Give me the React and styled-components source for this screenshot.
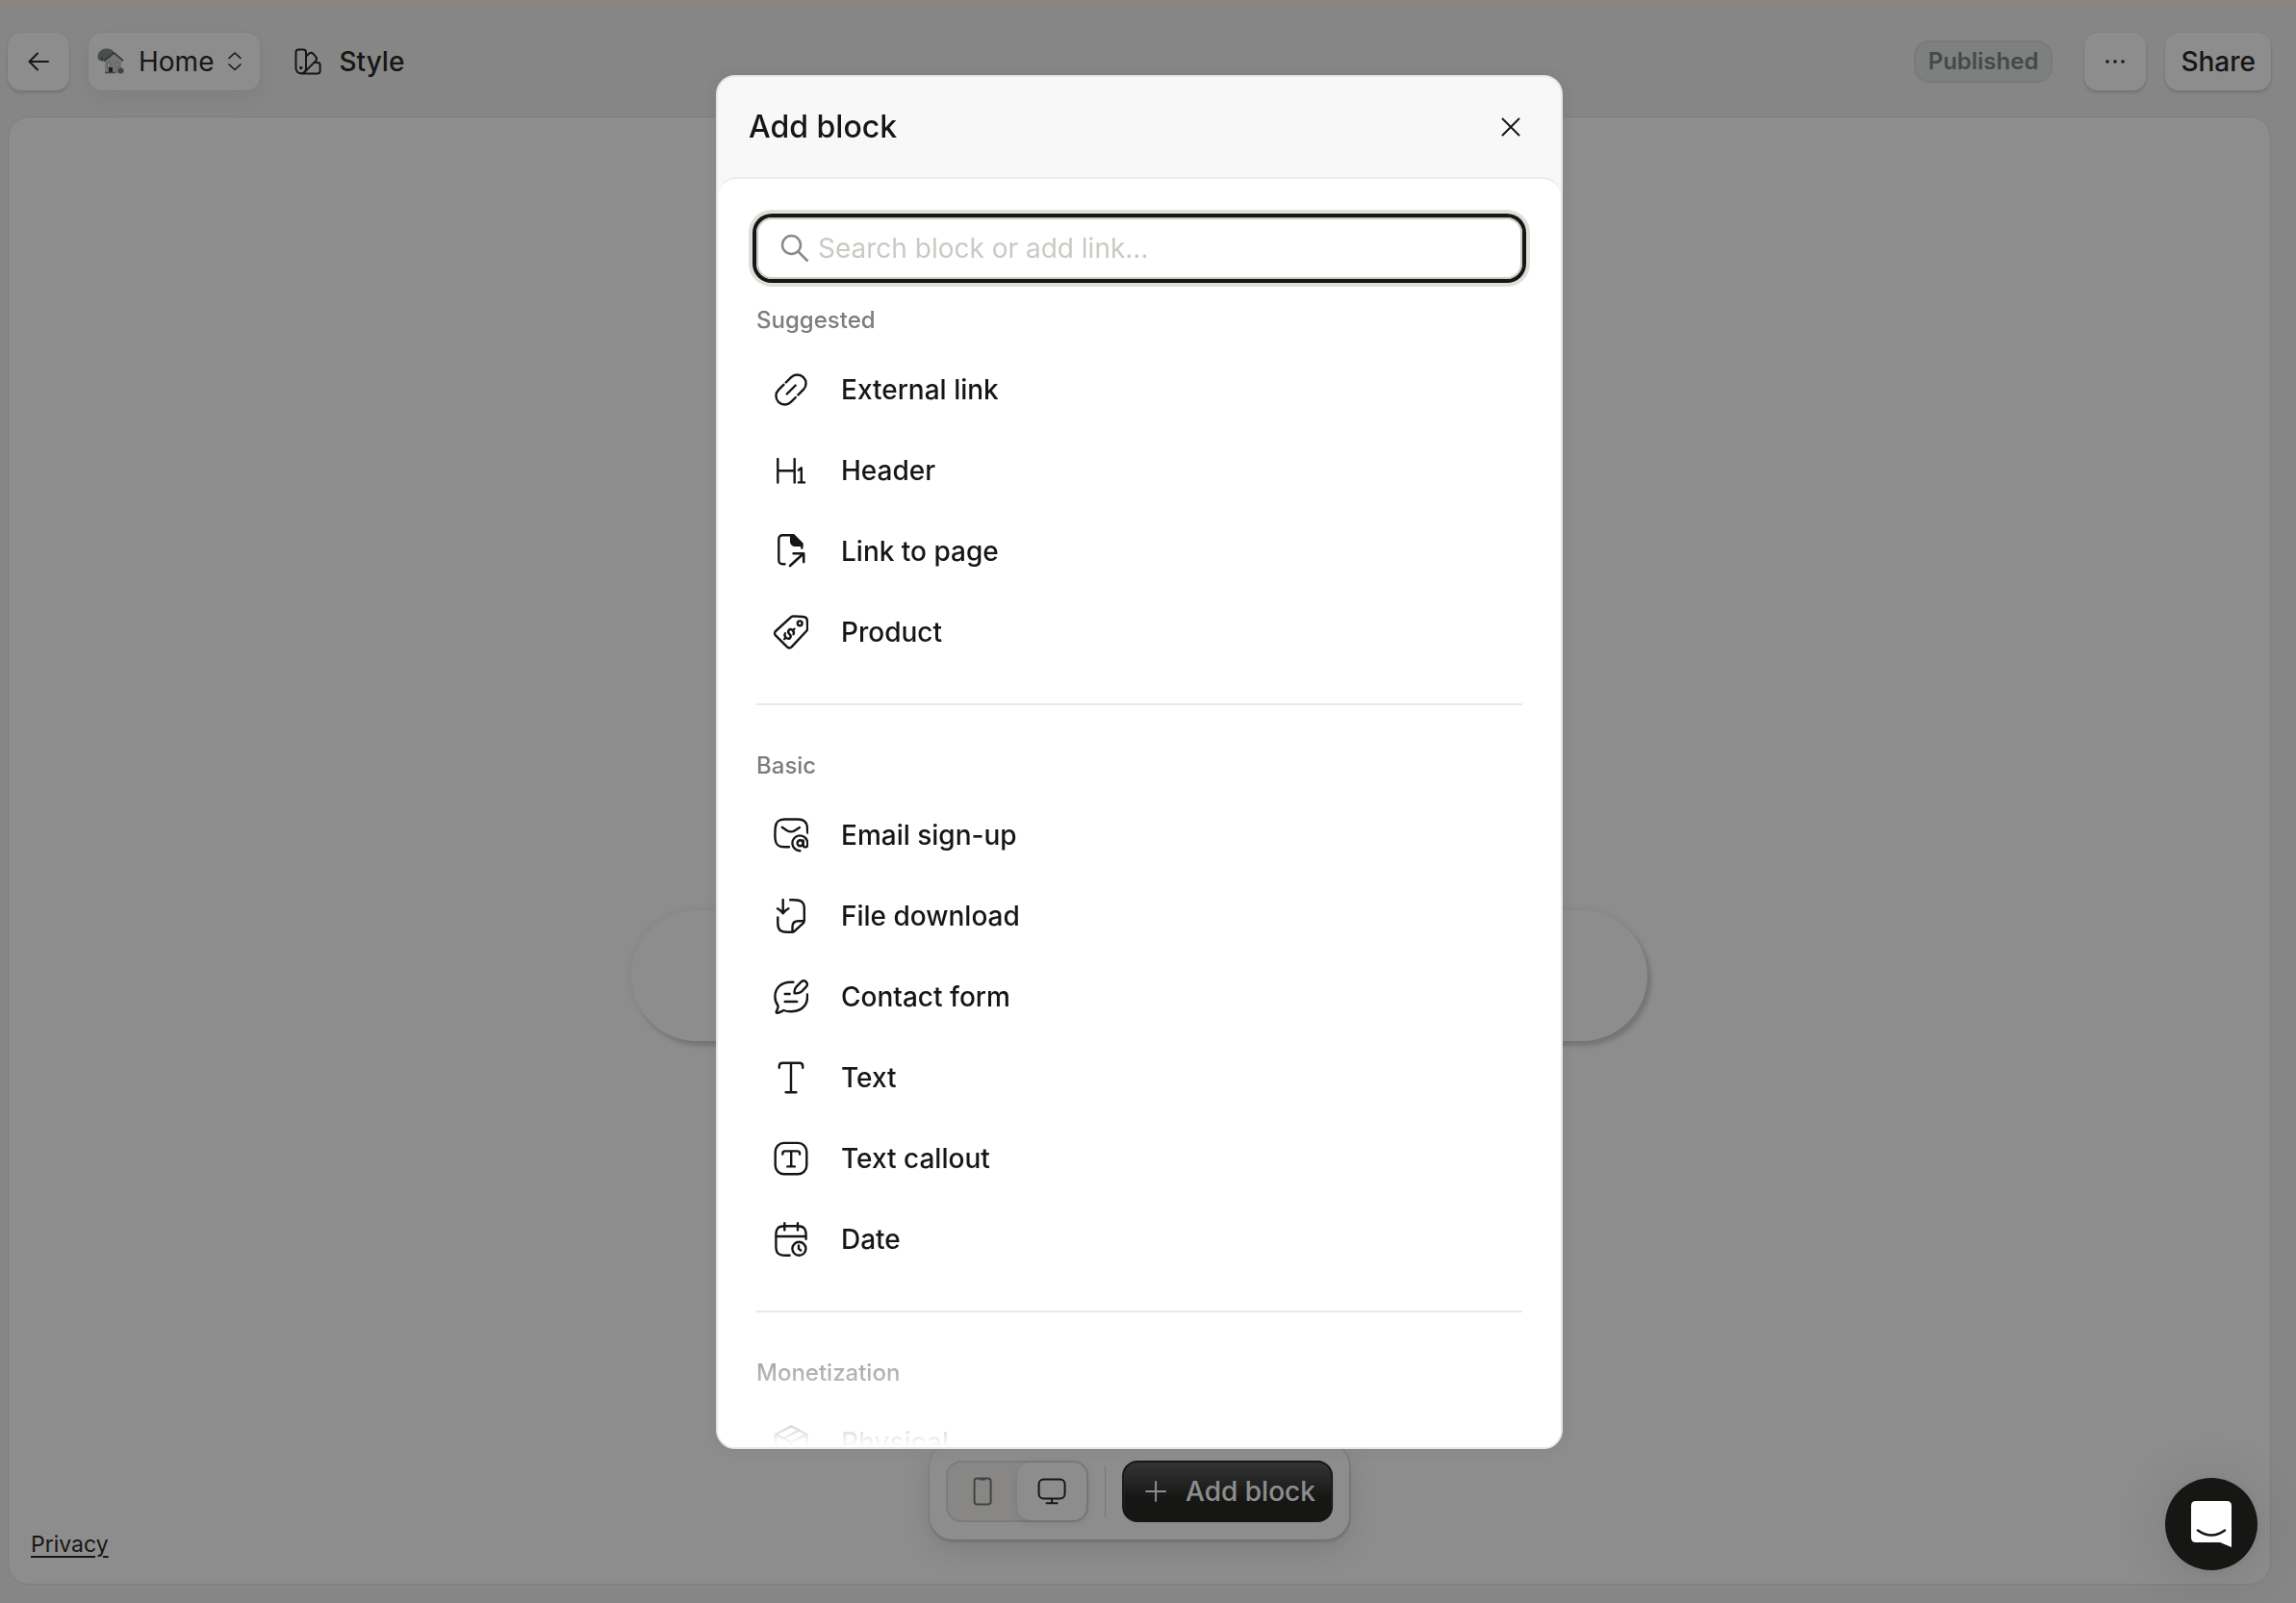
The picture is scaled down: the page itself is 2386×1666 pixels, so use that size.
import React from "react";
import styled, { createGlobalStyle } from "styled-components";

const ink = "#161614";
const scrim = "rgba(22, 22, 22, 0.49)";

const GlobalStyle = createGlobalStyle`
  * { box-sizing: border-box; }
  body { margin: 0; background: #f1f1f1; color: ${ink}; font-family: Inter, "Liberation Sans", sans-serif; font-size: 28px; line-height: 36px; }
  button, input { font: inherit; color: inherit; }
  h1, h2, h3, ul { margin: 0; padding: 0; }
`;

/* ---------- page ---------- */

const Page = styled.div`
  min-height: 100vh;
  display: flex;
  flex-direction: column;
  padding: 0 26px 19px 8px;
`;

const Strip = styled.div`
  height: 9px;
  margin: 0 -26px 0 -8px;
  background: #faf0ec;
`;

const TopBar = styled.header`
  display: flex;
  justify-content: space-between;
  align-items: center;
  padding: 25px 0 27px;
`;

const BarGroup = styled.div`
  display: flex;
  align-items: center;
  gap: 20px;
`;

const BarButton = styled.button`
  display: inline-flex;
  align-items: center;
  justify-content: center;
  gap: ${(p) => p.$gap || 0}px;
  height: 60px;
  min-width: 64px;
  padding: ${(p) => p.$pad || 0};
  border: 0;
  border-radius: 14px;
  background: ${(p) => (p.$plain ? "transparent" : "#fff")};
  box-shadow: ${(p) =>
    p.$plain
      ? "none"
      : p.$soft
      ? "0 0 2px rgba(0,0,0,.1), 0 8px 20px rgba(0,0,0,.06)"
      : "0 0 2px rgba(0,0,0,.12), 0 3px 3px rgba(0,0,0,.12)"};
  font-weight: ${(p) => (p.$medium ? 500 : 400)};
`;

const Badge = styled.span`
  display: inline-flex;
  align-items: center;
  height: 44px;
  margin-right: 13px;
  padding: 0 13px;
  border: 2px solid #d6dad8;
  border-radius: 16px;
  background: #e2e6e4;
  color: #6f7d77;
  font-size: 24px;
  font-weight: 600;
`;

const Canvas = styled.main`
  position: relative;
  flex: 1;
  display: flex;
  flex-direction: column;
  justify-content: space-between;
  align-items: center;
  padding: 824px 23px 25px;
  border: 1px solid #e2e2e2;
  border-radius: 22px;
  background: #fff;
`;

const PillBlock = styled.div`
  width: 100%;
  max-width: 1056px;
  height: 136px;
  border-radius: 68px;
  background: #fff;
  box-shadow: 4px 5px 4px rgba(60, 75, 68, 0.22), 0 0 8px rgba(60, 60, 60, 0.1);
`;

const PrivacyLink = styled.a`
  align-self: flex-start;
  color: inherit;
  font-size: 23px;
  line-height: 32px;
  text-underline-offset: 4px;
  text-decoration-thickness: 2px;
`;

/* ---------- floating toolbar ---------- */

const Dock = styled.div`
  position: absolute;
  bottom: 46px;
  left: 50%;
  transform: translateX(-50%);
  display: flex;
  align-items: center;
  gap: 17px;
  padding: 18px 17px;
  border-radius: 24px;
  background: #fff;
  box-shadow: 0 0 2px rgba(0, 0, 0, 0.16), 0 3px 3px rgba(0, 0, 0, 0.12), 0 10px 32px rgba(0, 0, 0, 0.12);
`;

const Toggle = styled.div`
  display: flex;
  height: 64px;
  border: 2px solid #dadddb;
  border-radius: 16px;
  background: #f7f3f2;
`;

const ToggleButton = styled.button`
  display: grid;
  place-items: center;
  width: 72px;
  height: 60px;
  padding: 0;
  border: 0;
  border-radius: 14px;
  background: ${(p) => (p.$on ? "#fff" : "transparent")};
  color: ${(p) => (p.$on ? ink : "#66706c")};
  box-shadow: ${(p) => (p.$on ? "0 2px 8px rgba(0,0,0,.12)" : "none")};
`;

const DockRule = styled.div`
  width: 1px;
  height: 54px;
  background: #cfd3d1;
`;

const AddButton = styled.button`
  display: flex;
  align-items: center;
  gap: 20px;
  height: 64px;
  padding: 0 16px 0 22px;
  border: 2px solid ${ink};
  border-radius: 16px;
  background: linear-gradient(#4f5452, ${ink} 62%);
  color: #fff;
  font-weight: 500;
`;

const ChatButton = styled.button`
  position: fixed;
  z-index: 3;
  right: 40px;
  bottom: 34px;
  display: grid;
  place-items: center;
  width: 96px;
  height: 96px;
  padding: 0;
  border: 0;
  border-radius: 50%;
  background: ${ink};
  box-shadow: 0 2px 12px rgba(0, 0, 0, 0.06), 0 4px 60px rgba(0, 0, 0, 0.12);
`;

/* ---------- dialog ---------- */

const Backdrop = styled.div`
  position: fixed;
  z-index: 2;
  inset: 0;
  display: flex;
  justify-content: center;
  padding: 78px 18px 160px 0;
  background: ${scrim};
`;

const Dialog = styled.section`
  display: flex;
  flex-direction: column;
  width: 100%;
  max-width: 880px;
  border: 2px solid #e6e6e6;
  border-radius: 20px;
  background: #f8f8f8;
  box-shadow: 0 0 16px rgba(0, 0, 0, 0.06);
  overflow: hidden;
`;

const DialogHead = styled.header`
  display: flex;
  align-items: center;
  justify-content: space-between;
  height: 104px;
  flex: none;
  padding: 0 32px;
`;

const DialogTitle = styled.h2`
  font-size: 32px;
  line-height: 40px;
  font-weight: 500;
`;

const CloseButton = styled.button`
  display: grid;
  place-items: center;
  width: 40px;
  height: 40px;
  padding: 0;
  border: 0;
  background: none;
`;

const DialogBody = styled.div`
  position: relative;
  flex: 1;
  min-height: 0;
  display: flex;
  flex-direction: column;
  padding: 40px 40px 0;
  border-top: 2px solid #ebebeb;
  border-radius: 20px 20px 0 0;
  background: #fff;
`;

const SearchBox = styled.label`
  flex: none;
  display: flex;
  align-items: center;
  gap: 9px;
  height: 64px;
  padding: 0 23px;
  border: 2px solid #c9cac5;
  border-radius: 16px;
  box-shadow: 0 0 0 4px ${ink}, 0 0 0 8px #dededb;
`;

const SearchInput = styled.input`
  flex: 1;
  min-width: 0;
  padding: 0;
  border: 0;
  outline: 0;
  background: none;
  &::placeholder { color: #c9cac5; opacity: 1; }
`;

const Blocks = styled.div`
  flex: 1;
  min-height: 0;
  overflow-y: auto;
  scrollbar-width: none;
  padding-top: 28px;
`;

const Fade = styled.div`
  position: absolute;
  inset: auto 0 0;
  height: 128px;
  background: linear-gradient(rgba(255, 255, 255, 0), #fff);
  pointer-events: none;
`;

const Section = styled.section`
  & + & {
    margin-top: 32px;
    padding-top: 48px;
    border-top: 2px solid #e8e8e8;
  }
`;

const SectionTitle = styled.h3`
  margin-bottom: 15px;
  color: #7c7e7c;
  font-size: 24px;
  line-height: 30px;
  font-weight: 500;
`;

const BlockList = styled.ul`
  list-style: none;
`;

const BlockButton = styled.button`
  display: flex;
  align-items: center;
  gap: 34px;
  width: 100%;
  height: 84px;
  padding: 0 18px;
  border: 0;
  background: none;
  font-weight: 500;
  text-align: left;
`;

/* ---------- icons ---------- */

const Icon = styled.svg`
  flex: none;
  fill: none;
  stroke: currentColor;
  stroke-linecap: round;
  stroke-linejoin: round;
`;

const Svg = ({ w = 36, h = w, sw = 2.4, children }) => (
  <Icon width={w} height={h} viewBox={`0 0 ${w} ${h}`} strokeWidth={sw} aria-hidden="true">
    {children}
  </Icon>
);

const Dot = styled.circle`
  fill: currentColor;
`;

const Solid = styled.path`
  fill: currentColor;
`;

const icons = {
  link: (
    <Svg>
      <path d="M12.7 10.5 18.1 5.1A9 9 0 0 1 30.9 17.9L25.4 23.4M10.4 12.8 5.1 18.1A9 9 0 0 0 17.9 30.9L22.8 26M13.7 22.5l9-9" />
    </Svg>
  ),
  header: (
    <Svg>
      <path d="M4.3 6v24.5M21.7 6v24.5M4.3 18.3h17.4M25.8 17.6l3-2.4v15.2M25.8 30.4h6.200" />
    </Svg>
  ),
  page: (
    <Svg>
      <path d="M11.5 31.2H9a3.7 3.7 0 0 1-3.7-3.7V5A3.7 3.7 0 0 1 9 1.3h11.6l8.7 8.8v4.4" />
      <Solid d="M18.2 1.5h2.6l8.5 8.7v1.6h-7a4 4 0 0 1-4.1-4.1z" />
      <path d="M17 33 31 20.3M20.6 20.3h10.6v8.8" strokeWidth="2.6" />
    </Svg>
  ),
  product: (
    <Svg>
      <path d="M18 2.4q1.2-1 2.8-1l9.9.6q4 .3 4.2 4.2l.2 7.8q0 1.8-1.2 3L18.6 33.4q-2.3 2.2-4.6 0L2 21.4q-2-2.2 0-4.4z" />
      <circle cx="27.2" cy="8.8" r="2.4" />
      <g transform="rotate(45 16.4 19.8)">
        <path d="M19.6 17.2q-.5-2.3-3.2-2.3-3.2 0-3.2 2.5t3.2 2.5q3.4 0 3.4 2.5 0 2.6-3.4 2.6-3 0-3.5-2.4M16.4 12.6v2.2M16.4 25v2.2" />
      </g>
    </Svg>
  ),
  email: (
    <Svg>
      <path d="M16 30.3h-4.6c-7 0-9.4-2.6-9.8-8.4-.3-4.2-.2-8.3.2-12.2C2.5 3.8 5.2 1.7 11 1.5h14.6c6 .1 8.600 2.5 9.300 7.900l.3 6.200M8.800 9.800l4.700 3.200q4.500 2.800 8.800 0l4.600-2.900" />
      <path d="M27.4 34.2a7.900 7.900 0 1 1 7.800-8v1.700c0 3.300-4.500 3.300-4.500 0v-4.500" />
      <circle cx="27.6" cy="26.2" r="3" />
    </Svg>
  ),
  download: (
    <Svg>
      <path d="M9.7 1v14M4 10.2q3.400 1.700 5.700 5 2.300-3.300 5.700-5" />
      <path d="M17.2 1.300h3.300c8 0 11.300 2.300 11.300 9v12.500q0 1.500-1 2.500l-9.300 8.500q-1 1-2.500 1h-5.500c-6.600 0-9.200-2.600-9.200-9.300v-6M19.5 34.500v-5.300q0-6 6-6h6.200" />
    </Svg>
  ),
  contact: (
    <Svg>
      <path d="M20.4 2.7h-2.900C7.800 2.700 1.400 9 1.400 17.8c0 3.700 1 6.600 3.100 9.400.8 3.500-2.300 5.200-1.800 6.900.8 1.600 5-.5 7.600-2.100 2.200.9 4.600 1.300 7.200 1.300C28 33.300 35 27.700 35 18v-2.600" />
      <path d="M21.7 14.300q-.7-4.200 2-6.900l5.200-5.200q2.200-1.900 4.700.1 2.400 2.300.6 4.800l-5 5.200q-2.900 2.600-7.500 2zM11.700 15h5M11.700 23h12.500" />
    </Svg>
  ),
  text: (
    <Svg>
      <path d="M5.800 7.700V6q0-3.300 3.400-3.300h17.600q3.400 0 3.400 3.300v1.700M18 2.700v30.500M12.600 33.200h10.800" />
    </Svg>
  ),
  callout: (
    <Svg>
      <rect x="1.700" y="1.900" width="32.600" height="32.400" rx="9" />
      <path d="M9.300 13.600v-.7q0-2.500 2.600-2.500h12.600q2.600 0 2.600 2.500v.7M18.200 10.400v16M14.300 26.400h7.600" />
    </Svg>
  ),
  date: (
    <Svg>
      <path d="M16.600 34.700h-4.500c-7.600 0-9.700-2.600-9.700-9.700V13.500c0-6.800 2.400-9.200 9.200-9.200h12.800c6.800 0 9.200 2.400 9.200 9.200v4.300M2.400 15h31.200M11.300 1.300v7.100M25 1.300v7.100" />
      <circle cx="26.400" cy="27.800" r="7" />
      <path d="M26 24.500v3.400l2.200 1.600" />
    </Svg>
  ),
  box: (
    <Svg>
      <path d="M18.300 1.400 34.300 9.700v16.600L18.300 34.600 2 26.300V9.700zM2 9.700l16.300 8.300 16-8.300M18.300 18v16.600M10 14l16.500-8.500" />
    </Svg>
  ),
};

const House = () => (
  <svg width="28" height="28" viewBox="0 0 28 28" aria-hidden="true">
    <path d="M1 12C-1 6 3 1 9 .5c5-.4 8 2 9 5l-8 8H5z" fill="#7b8682" />
    <path d="M4 9h2v4H4z" fill="#4e5754" />
    <path d="M7 13 17 5l10 8v1l-2 1v11H8V14z" fill="#c6ceca" />
    <path d="M7 13.500 17.500 5 27 13" fill="none" stroke="#3d4542" strokeWidth="1.600" />
    <path d="M10.500 15h3v5h-3zM19 15h3v5h-3z" fill="#f4f7f5" stroke="#8b9591" strokeWidth=".8" />
    <path d="M12 20h4v6h-4z" fill="#202523" />
    <circle cx="24.500" cy="23.500" r="3" fill="#66706c" />
    <path d="M8 25.500h11" stroke="#66706c" strokeWidth="1.500" />
  </svg>
);

const sections = [
  ["Suggested", [["link", "External link"], ["header", "Header"], ["page", "Link to page"], ["product", "Product"]]],
  ["Basic", [["email", "Email sign-up"], ["download", "File download"], ["contact", "Contact form"], ["text", "Text"], ["callout", "Text callout"], ["date", "Date"]]],
  ["Monetization", [["box", "Physical"]]],
];

export default function App() {
  return (
    <>
      <GlobalStyle />
      <Page>
        <Strip />
        <TopBar>
          <BarGroup>
            <BarButton aria-label="Back">
              <Svg w={22} h={20} sw={2}>
                <path d="M21 10H1.500M10 1.500 1.500 10l8.500 8.500" />
              </Svg>
            </BarButton>
            <BarButton $soft $gap={15} $pad="0 19px 0 9px">
              <House />
              Home
              <Svg w={14} h={20} sw={1.6}>
                <path d="m1 6.500 6-5.500 6 5.500M1 13l6 5.500 6-5.500" />
              </Svg>
            </BarButton>
            <BarButton $plain $medium $gap={18} $pad="0 16px">
              <Svg w={28} h={28} sw={2}>
                <path d="M1.500 4.500q0-3 3-3H9q3 0 3 3V21a5.200 5.200 0 0 1-10.500 0zM12 8.500l3.500-3q2-1.600 3.800.2l3 3.500q1.600 2-.1 3.900L10 25.500M20.500 15H24q2.600 0 2.600 2.600v6.200q0 2.600-2.600 2.600H6.500" />
                <Dot cx="6.800" cy="20.500" r=".7" />
              </Svg>
              Style
            </BarButton>
          </BarGroup>
          <BarGroup>
            <Badge>Published</Badge>
            <BarButton aria-label="More options">
              <Svg w={22} h={6} sw={0}>
                <Dot cx="3" cy="3" r="1.800" />
                <Dot cx="11" cy="3" r="1.800" />
                <Dot cx="19" cy="3" r="1.800" />
              </Svg>
            </BarButton>
            <BarButton $medium $pad="0 16px">Share</BarButton>
          </BarGroup>
        </TopBar>
        <Canvas>
          <PillBlock />
          <PrivacyLink href="#privacy">Privacy</PrivacyLink>
          <Dock>
            <Toggle>
              <ToggleButton aria-label="Mobile preview">
                <Svg w={20} h={30} sw={2}>
                  <rect x="1.500" y="1.500" width="17" height="27" rx="3" />
                  <path d="M7.500 2.500h5" />
                </Svg>
              </ToggleButton>
              <ToggleButton $on aria-label="Desktop preview">
                <Svg w={30} h={28} sw={2}>
                  <rect x="1.500" y="1.500" width="27" height="20" rx="5" />
                  <path d="M15 22v4M9.500 26.200h11" />
                </Svg>
              </ToggleButton>
            </Toggle>
            <DockRule />
            <AddButton>
              <Svg w={22} h={22} sw={2}>
                <path d="M11 1v20M1 11h20" />
              </Svg>
              Add block
            </AddButton>
          </Dock>
        </Canvas>
      </Page>

      <Backdrop>
        <Dialog role="dialog" aria-modal="true" aria-labelledby="add-block-title">
          <DialogHead>
            <DialogTitle id="add-block-title">Add block</DialogTitle>
            <CloseButton aria-label="Close">
              <Svg w={20} h={20} sw={2}>
                <path d="m1.500 1.500 17 17M18.500 1.500l-17 17" />
              </Svg>
            </CloseButton>
          </DialogHead>
          <DialogBody>
            <SearchBox>
              <svg width="30" height="30" viewBox="0 0 30 30" fill="none" stroke="#888a88" strokeWidth="2.500" aria-hidden="true">
                <circle cx="11.500" cy="11.500" r="9.500" />
                <path d="m18.500 18.500 10 10" />
              </svg>
              <SearchInput type="text" aria-label="Search block or add link" placeholder="Search block or add link..." />
            </SearchBox>
            <Blocks>
              {sections.map(([title, items]) => (
                <Section key={title}>
                  <SectionTitle>{title}</SectionTitle>
                  <BlockList>
                    {items.map(([icon, label]) => (
                      <li key={label}>
                        <BlockButton>
                          {icons[icon]}
                          {label}
                        </BlockButton>
                      </li>
                    ))}
                  </BlockList>
                </Section>
              ))}
            </Blocks>
            <Fade />
          </DialogBody>
        </Dialog>
      </Backdrop>

      <ChatButton aria-label="Open chat">
        <svg width="42" height="48" viewBox="0 0 42 48" aria-hidden="true">
          <path d="M5 0h32q5 0 5 5v43l-12-5H5q-5 0-5-5V5q0-5 5-5z" fill="#fff" />
          <path d="M7 30.500q14 10 28 0" fill="none" stroke={ink} strokeWidth="2.600" strokeLinecap="round" />
        </svg>
      </ChatButton>
    </>
  );
}
